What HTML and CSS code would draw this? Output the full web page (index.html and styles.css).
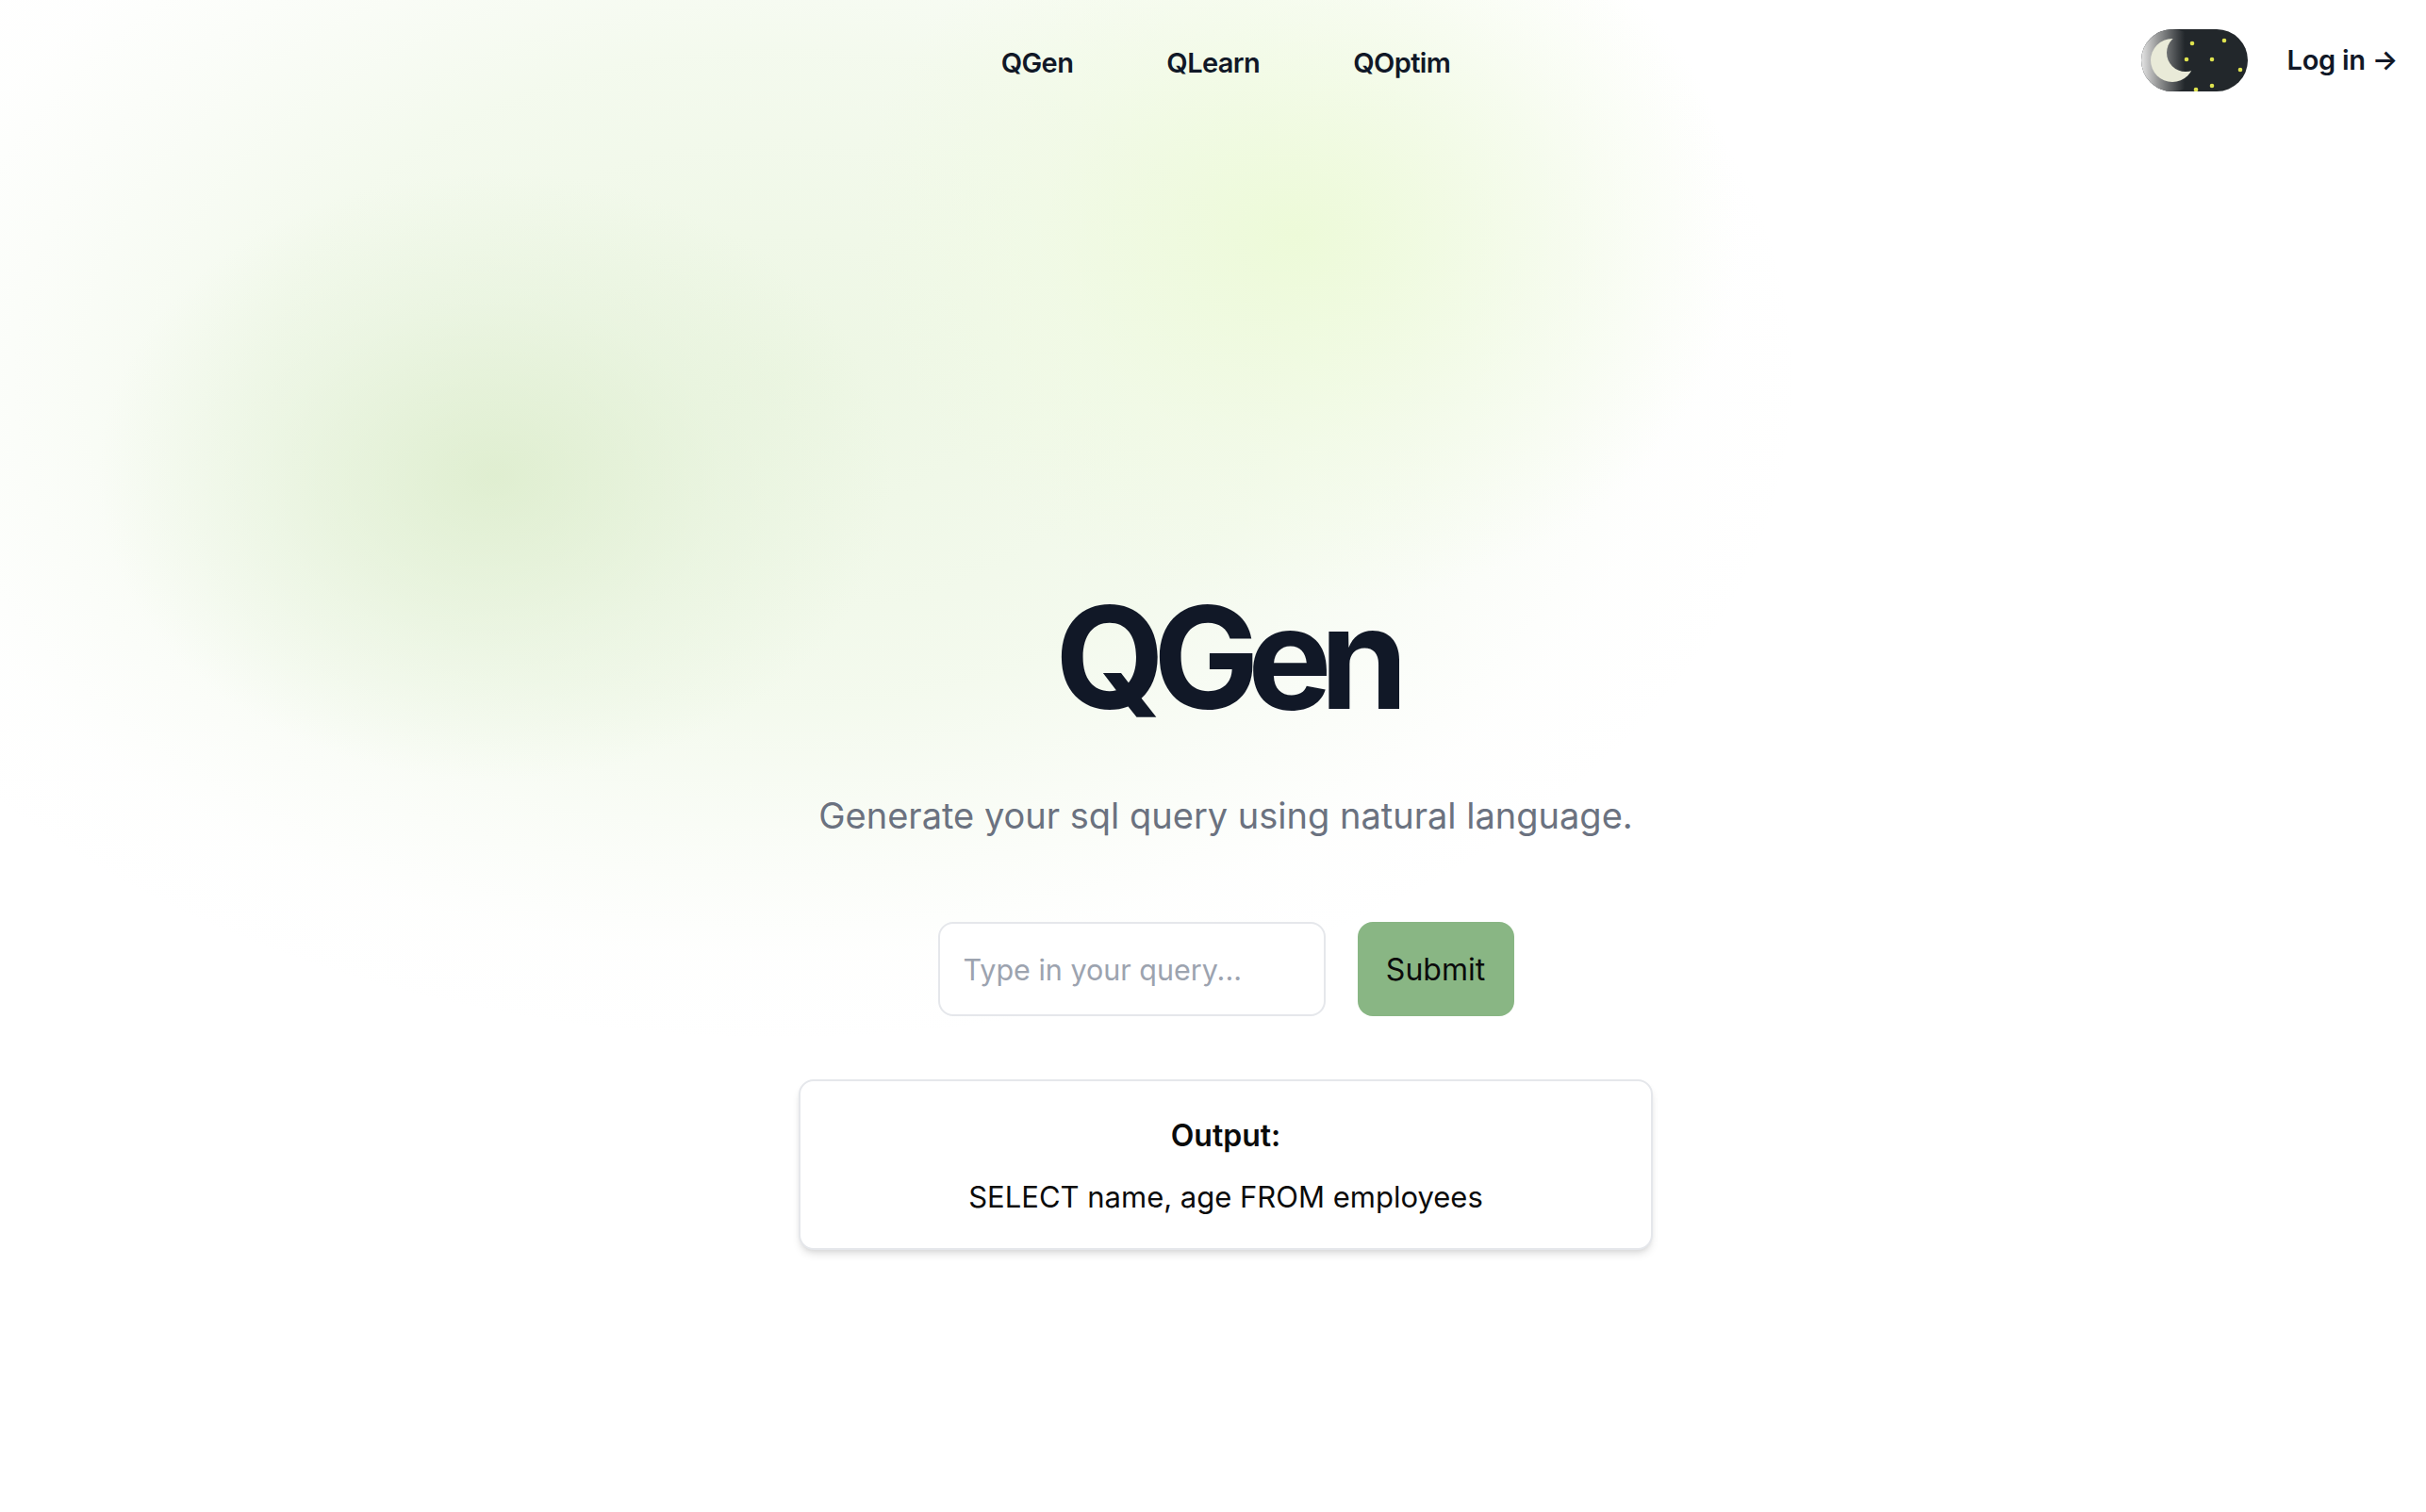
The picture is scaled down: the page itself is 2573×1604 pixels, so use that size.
FILE: index.html
```html
<!DOCTYPE html>
<html lang="en">
<head>
<meta charset="utf-8">
<title>QGen</title>
<link rel="stylesheet" href="styles.css">
</head>
<body>
<div class="page">
  <div class="bg" aria-hidden="true">
    <div class="blob blob-a"></div>
    <div class="blob blob-b"></div>
    <div class="blob blob-c"></div>
  </div>
  <header class="header">
    <div class="side side-left"></div>
    <nav class="links">
      <a href="#" class="link">QGen</a>
      <a href="#" class="link">QLearn</a>
      <a href="#" class="link">QOptim</a>
    </nav>
    <div class="side side-right">
      <button class="toggle" aria-label="Toggle dark mode">
        <svg width="113" height="66" viewBox="0 0 113 66">
          <defs>
            <linearGradient id="glow" x1="0" y1="0" x2="1" y2="0">
              <stop offset="0" stop-color="#e4e4e4"/>
              <stop offset="0.25" stop-color="#9a9b9b"/>
              <stop offset="0.7" stop-color="#22272b"/>
            </linearGradient>
            <mask id="crescent">
              <rect width="113" height="66" fill="#fff"/>
              <circle cx="47" cy="25" r="20" fill="#000"/>
            </mask>
          </defs>
          <rect x="0" y="0" width="113" height="66" rx="33" fill="#22272b"/>
          <circle cx="33" cy="33" r="33" fill="url(#glow)"/>
          <circle cx="33" cy="33" r="23" fill="#e9ead8" mask="url(#crescent)"/>
          <g fill="#dfe34f">
            <circle cx="54" cy="15" r="2.3"/>
            <circle cx="88" cy="12" r="2.3"/>
            <circle cx="48" cy="32" r="2.3"/>
            <circle cx="75" cy="32" r="2.3"/>
            <circle cx="105" cy="43" r="2.3"/>
            <circle cx="75" cy="60" r="2.3"/>
            <circle cx="58" cy="64" r="2.3"/>
          </g>
        </svg>
      </button>
      <a href="#" class="login">Log in <span class="arrow">&rarr;</span></a>
    </div>
  </header>

  <main class="main">
    <h1 class="title">QGen</h1>
    <p class="subtitle">Generate your sql query using natural language.</p>
    <form class="query-form" onsubmit="return false;">
      <input class="query-input" type="text" placeholder="Type in your query...">
      <button class="submit" type="submit">Submit</button>
    </form>
    <section class="output-card">
      <h3 class="output-label">Output:</h3>
      <p class="output-text">SELECT name, age FROM employees</p>
    </section>
  </main>
</div>
</body>
</html>
```
FILE: styles.css
```css
html, body {
  margin: 0;
  padding: 0;
  background: #ffffff;
  overflow: hidden;
}

body {
  font-family: Inter, "Noto Sans", "Liberation Sans", sans-serif;
  color: #111827;
}

.page {
  position: relative;
  width: 2600px;
  min-height: 1604px;
}

.bg {
  position: absolute;
  inset: 0;
  overflow: hidden;
  z-index: 0;
  pointer-events: none;
}

.blob {
  position: absolute;
  border-radius: 50%;
}

.blob-a {
  left: -250px;
  top: -300px;
  width: 2150px;
  height: 1400px;
  background: radial-gradient(ellipse at 50% 50%,
    rgba(236, 246, 226, 0.95) 0%,
    rgba(240, 248, 232, 0.75) 35%,
    rgba(245, 250, 240, 0.45) 52%,
    rgba(250, 252, 248, 0.2) 62%,
    rgba(255, 255, 255, 0) 72%);
}

.blob-b {
  left: 100px;
  top: 180px;
  width: 850px;
  height: 650px;
  background: radial-gradient(ellipse at 50% 50%, rgba(216, 234, 198, 0.7) 0%, rgba(226, 240, 214, 0.42) 40%, rgba(255, 255, 255, 0) 70%);
}

.blob-c {
  left: 900px;
  top: -150px;
  width: 950px;
  height: 800px;
  background: radial-gradient(ellipse at 50% 50%, rgba(236, 250, 214, 0.9) 0%, rgba(240, 250, 226, 0.55) 40%, rgba(255, 255, 255, 0) 70%);
}

.header {
  position: relative;
  z-index: 1;
  display: flex;
  align-items: center;
  padding: 31px 57px 0 57px;
  height: 66px;
}

.side {
  flex: 1;
  display: flex;
  align-items: center;
}

.side-right {
  justify-content: flex-end;
  gap: 42px;
}

.links {
  display: flex;
  gap: 99px;
  padding-top: 6px;
}

.link {
  font-size: 29px;
  font-weight: 600;
  line-height: 50px;
  color: #111827;
  text-decoration: none;
  letter-spacing: -0.6px;
}

.toggle {
  display: block;
  width: 113px;
  height: 66px;
  padding: 0;
  border: 0;
  background: none;
  cursor: pointer;
}

.toggle svg {
  display: block;
}

.login {
  font-size: 29px;
  font-weight: 600;
  line-height: 50px;
  color: #111827;
  text-decoration: none;
  letter-spacing: -0.3px;
}

.main {
  position: relative;
  z-index: 1;
  display: flex;
  flex-direction: column;
  align-items: center;
}

.title {
  margin: 526px 0 0;
  font-size: 150px;
  line-height: 150px;
  font-weight: 700;
  letter-spacing: -12.5px;
  color: #111827;
}

.subtitle {
  margin: 63px 0 0;
  font-size: 38px;
  line-height: 58px;
  color: #6b7280;
}

.query-form {
  display: flex;
  gap: 34px;
  margin-top: 84px;
}

.query-input {
  box-sizing: border-box;
  width: 411px;
  height: 100px;
  padding: 0 25px;
  border: 2px solid #e5e7eb;
  border-radius: 16px;
  background: #ffffff;
  font-family: inherit;
  font-size: 30.5px;
  color: #111827;
  outline: none;
}

.query-input::placeholder {
  color: #9ca3af;
}

.submit {
  width: 166px;
  height: 100px;
  border: 0;
  border-radius: 16px;
  background: #89b684;
  font-family: inherit;
  font-size: 32px;
  color: #0b0b0b;
  cursor: pointer;
}

.output-card {
  box-sizing: border-box;
  width: 906px;
  margin-top: 67px;
  padding: 34px 32px 30px;
  border: 2px solid #e5e7eb;
  border-radius: 16px;
  background: #ffffff;
  box-shadow: 0 6px 10px -2px rgba(0, 0, 0, 0.12), 0 3px 6px -3px rgba(0, 0, 0, 0.1);
  text-align: center;
}

.output-label {
  margin: 0;
  font-size: 32px;
  line-height: 48px;
  font-weight: 600;
  color: #0b0b0b;
}

.output-text {
  margin: 17px 0 0;
  font-size: 31px;
  line-height: 48px;
  color: #0b0b0b;
}
```
